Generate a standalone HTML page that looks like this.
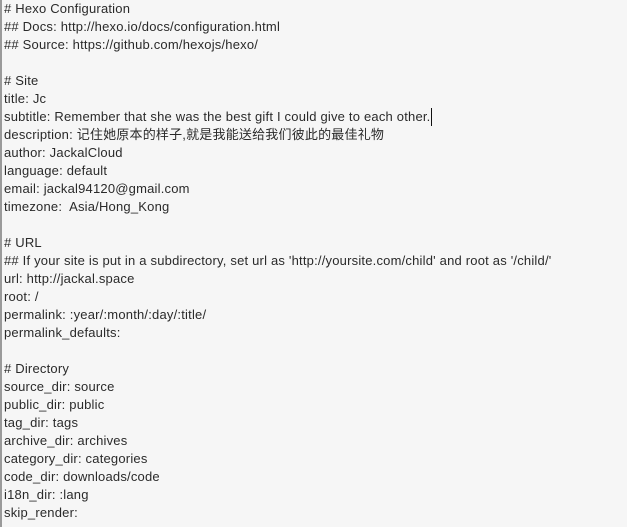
<!DOCTYPE html>
<html><head><meta charset="utf-8"><style>
html,body{margin:0;padding:0;width:627px;height:527px;overflow:hidden;background:#f6f6f6;}
.b{position:absolute;left:0;top:0;width:2px;height:527px;background:#9a9a9a;}
pre{position:absolute;left:4px;top:0px;margin:0;font-family:"Liberation Sans","Noto Sans CJK SC",sans-serif;font-size:13px;letter-spacing:0.2px;line-height:18px;color:#2a2a2a;white-space:pre;}
.c{position:absolute;left:431px;top:108px;width:1px;height:18px;background:#111;}
</style></head><body><div class="b"></div><pre># Hexo Configuration
## Docs: http://hexo.io/docs/configuration.html
## Source: https://github.com/hexojs/hexo/

# Site
title: Jc
subtitle: Remember that she was the best gift I could give to each other.
description: 记住她原本的样子,就是我能送给我们彼此的最佳礼物
author: JackalCloud
language: default
email: jackal94120@gmail.com
timezone:  Asia/Hong_Kong

# URL
## If your site is put in a subdirectory, set url as 'http://yoursite.com/child' and root as '/child/'
url: http://jackal.space
root: /
permalink: :year/:month/:day/:title/
permalink_defaults:

# Directory
source_dir: source
public_dir: public
tag_dir: tags
archive_dir: archives
category_dir: categories
code_dir: downloads/code
i18n_dir: :lang
skip_render:</pre><div class="c"></div></body></html>
